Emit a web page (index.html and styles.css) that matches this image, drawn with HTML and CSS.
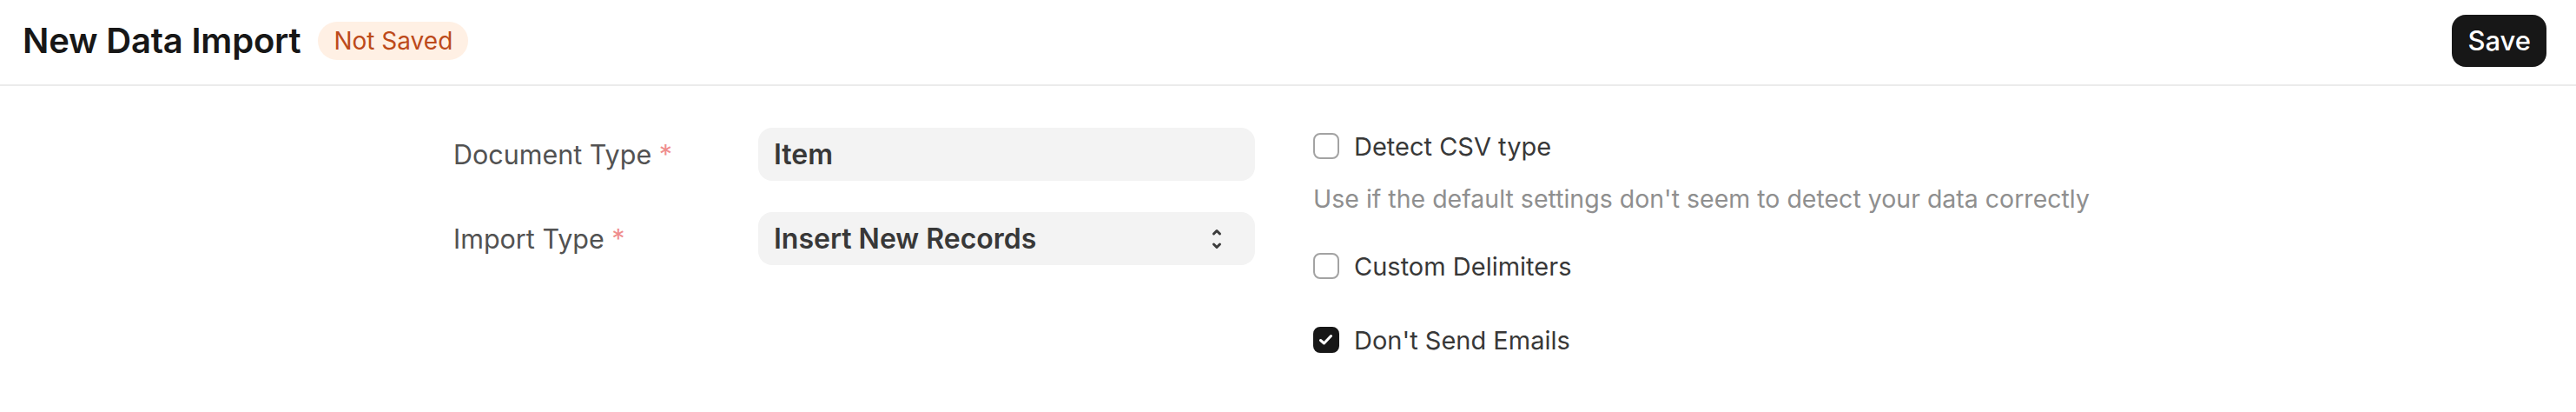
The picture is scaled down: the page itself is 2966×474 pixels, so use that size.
FILE: index.html
```html
<!DOCTYPE html>
<html lang="en">
<head>
<meta charset="utf-8">
<title>New Data Import</title>
<link rel="stylesheet" href="styles.css">
</head>
<body>
<header class="page-head">
  <div class="title-area">
    <h1 class="title">New Data Import</h1>
    <span class="pill">Not Saved</span>
  </div>
  <button class="btn-save" type="button">Save</button>
</header>
<main class="form">
  <section class="col col-left">
    <div class="field">
      <label class="label">Document Type <span class="req">*</span></label>
      <div class="input">Item</div>
    </div>
    <div class="field">
      <label class="label">Import Type <span class="req">*</span></label>
      <div class="input select">
        <span>Insert New Records</span>
        <svg class="chev" viewBox="0 0 12 28" width="12" height="28" aria-hidden="true">
          <path d="M2.5 8 L6 4.5 L9.5 8" fill="none" stroke="#3d3d3d" stroke-width="3" stroke-linecap="round" stroke-linejoin="round"/>
          <path d="M2.5 20 L6 23.5 L9.5 20" fill="none" stroke="#3d3d3d" stroke-width="3" stroke-linecap="round" stroke-linejoin="round"/>
        </svg>
      </div>
    </div>
  </section>
  <section class="col col-right">
    <div class="check">
      <span class="box"></span>
      <span class="check-label">Detect CSV type</span>
    </div>
    <p class="desc">Use if the default settings don't seem to detect your data correctly</p>
    <div class="check">
      <span class="box"></span>
      <span class="check-label">Custom Delimiters</span>
    </div>
    <div class="check">
      <span class="box checked">
        <svg viewBox="0 0 20 20" width="20" height="20" aria-hidden="true"><path d="M3.5 10.5 L7.5 14 L15.5 5.5" fill="none" stroke="#fff" stroke-width="3" stroke-linecap="round" stroke-linejoin="round"/></svg>
      </span>
      <span class="check-label">Don't Send Emails</span>
    </div>
  </section>
</main>
</body>
</html>
```
FILE: styles.css
```css
* { box-sizing: border-box; }
html, body { margin: 0; padding: 0; background: #fff; }
body {
  font-family: Inter, "Noto Sans", "Liberation Sans", sans-serif;
  color: #171717;
  width: 2966px;
}
.page-head {
  height: 99px;
  border-bottom: 2px solid #ebebeb;
  display: flex;
  align-items: center;
  justify-content: space-between;
  padding: 0 34px 0 26px;
}
.title-area { display: flex; align-items: center; gap: 20px; margin-top: -4px; }
.title {
  margin: 0;
  font-size: 40px;
  font-weight: 600;
  color: #171717;
  letter-spacing: -0.2px;
}
.pill {
  display: inline-flex;
  align-items: center;
  height: 44px;
  padding: 0 18px;
  border-radius: 22px;
  background: #fff0e4;
  color: #bd4a1a;
  font-size: 28px;
}
.btn-save {
  height: 60px;
  padding: 0 18px;
  border: none;
  border-radius: 16px;
  background: #171717;
  color: #fff;
  font-family: inherit;
  font-size: 31px;
  font-weight: 500;
  margin-top: -4px;
}
.form {
  width: 1922px;
  margin: 0 auto;
  padding-top: 48px;
  display: grid;
  grid-template-columns: 924px 924px;
  column-gap: 66px;
}
.col-left { display: flex; flex-direction: column; gap: 36px; }
.field {
  display: grid;
  grid-template-columns: 351px 572px;
  align-items: center;
}
.label { font-size: 30.5px; color: #525252; }
.req { color: #ef8d8d; }
.input {
  height: 61px;
  border-radius: 16px;
  background: #f3f3f3;
  padding: 0 18px;
  display: flex;
  align-items: center;
  justify-content: space-between;
  font-size: 32px;
  font-weight: 600;
  color: #383838;
}
.chev { width: 12px; height: 28px; margin-right: 20px; }
.col-right { display: flex; flex-direction: column; padding-top: 6px; }
.check { display: flex; align-items: center; gap: 17px; height: 30px; }
.box {
  width: 30px; height: 30px;
  border: 2px solid #a3a3a3;
  border-radius: 8px;
  display: flex; align-items: center; justify-content: center;
}
.box.checked { background: #171717; border-color: #171717; }
.box svg { width: 20px; height: 20px; }
.check-label { font-size: 29px; color: #383838; }
.desc {
  margin: 29px 0 45px;
  font-size: 28.5px;
  color: #8f8f8f;
  line-height: 34px;
}
.col-right .check + .check { margin-top: 55px; }
```
